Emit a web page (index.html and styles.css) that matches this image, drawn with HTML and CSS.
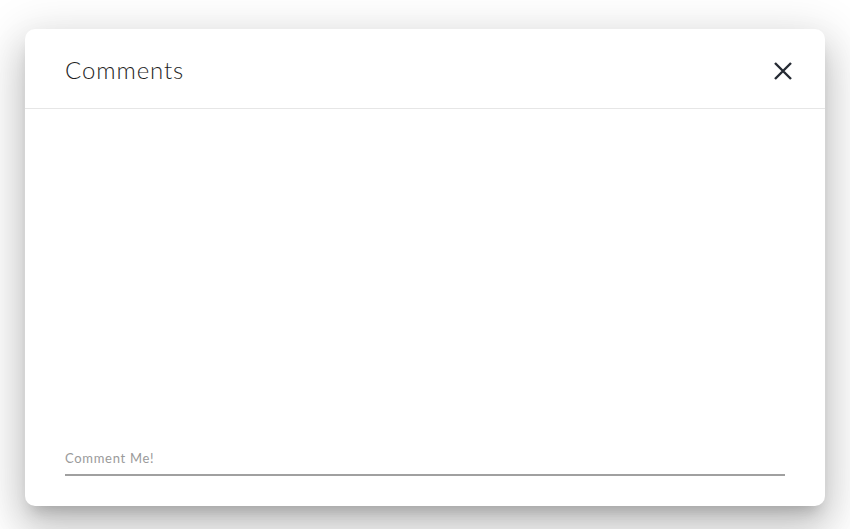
FILE: index.html
```html
<!DOCTYPE html>
<html>
<head>
<meta charset="utf-8">
<link rel="stylesheet" href="styles.css">
</head>
<body>
<div class="page">
  <div class="dialog">
    <div class="dialog-header">
      <h2 class="dialog-title">Comments</h2>
      <button class="close-btn" aria-label="Close">
        <svg width="20" height="20" viewBox="0 0 20 20"><path d="M2 2 L18 18 M18 2 L2 18" stroke="#252a33" stroke-width="2.4" stroke-linecap="butt" fill="none"/></svg>
      </button>
    </div>
    <div class="dialog-body">
      <div class="field">
        <input class="field-input" type="text" placeholder="Comment Me!">
      </div>
    </div>
  </div>
</div>
</body>
</html>
```
FILE: styles.css
```css
html, body {
  margin: 0;
  padding: 0;
  background: #ffffff;
  font-family: "Lato", "Open Sans", sans-serif;
}
.page {
  padding: 29px 25px 23px 25px;
}
.dialog {
  width: 800px;
  height: 477px;
  background: #fff;
  border-radius: 10px;
  box-shadow: 0 11px 15px -7px rgba(0,0,0,0.2), 0 24px 38px 3px rgba(0,0,0,0.14), 0 9px 46px 8px rgba(0,0,0,0.12);
  display: flex;
  flex-direction: column;
}
.dialog-header {
  height: 79px;
  border-bottom: 1px solid #e6e6e6;
  display: flex;
  align-items: center;
  justify-content: space-between;
  padding: 0 32px 0 40px;
  box-sizing: content-box;
}
.dialog-title {
  margin: 0;
  font-size: 24px;
  font-weight: 300;
  letter-spacing: 0.9px;
  color: #1f1f1f;
  padding-top: 2px;
}
.close-btn {
  background: none;
  border: 0;
  padding: 0;
  width: 20px;
  height: 20px;
  cursor: pointer;
  margin-top: 4px;
}
.close-btn svg { display: block; }
.dialog-body {
  flex: 1;
  display: flex;
  flex-direction: column;
  justify-content: flex-end;
  padding: 0 40px 30px 40px;
}
.field-input {
  width: 100%;
  box-sizing: border-box;
  border: 0;
  border-bottom: 2px solid #a0a0a0;
  padding: 0 0 8px 0;
  font-family: "Lato", "Open Sans", sans-serif;
  font-size: 13px;
  letter-spacing: 0.7px;
  color: #333;
  outline: none;
  background: transparent;
}
.field-input::placeholder {
  color: #9a9a9a;
}
```
